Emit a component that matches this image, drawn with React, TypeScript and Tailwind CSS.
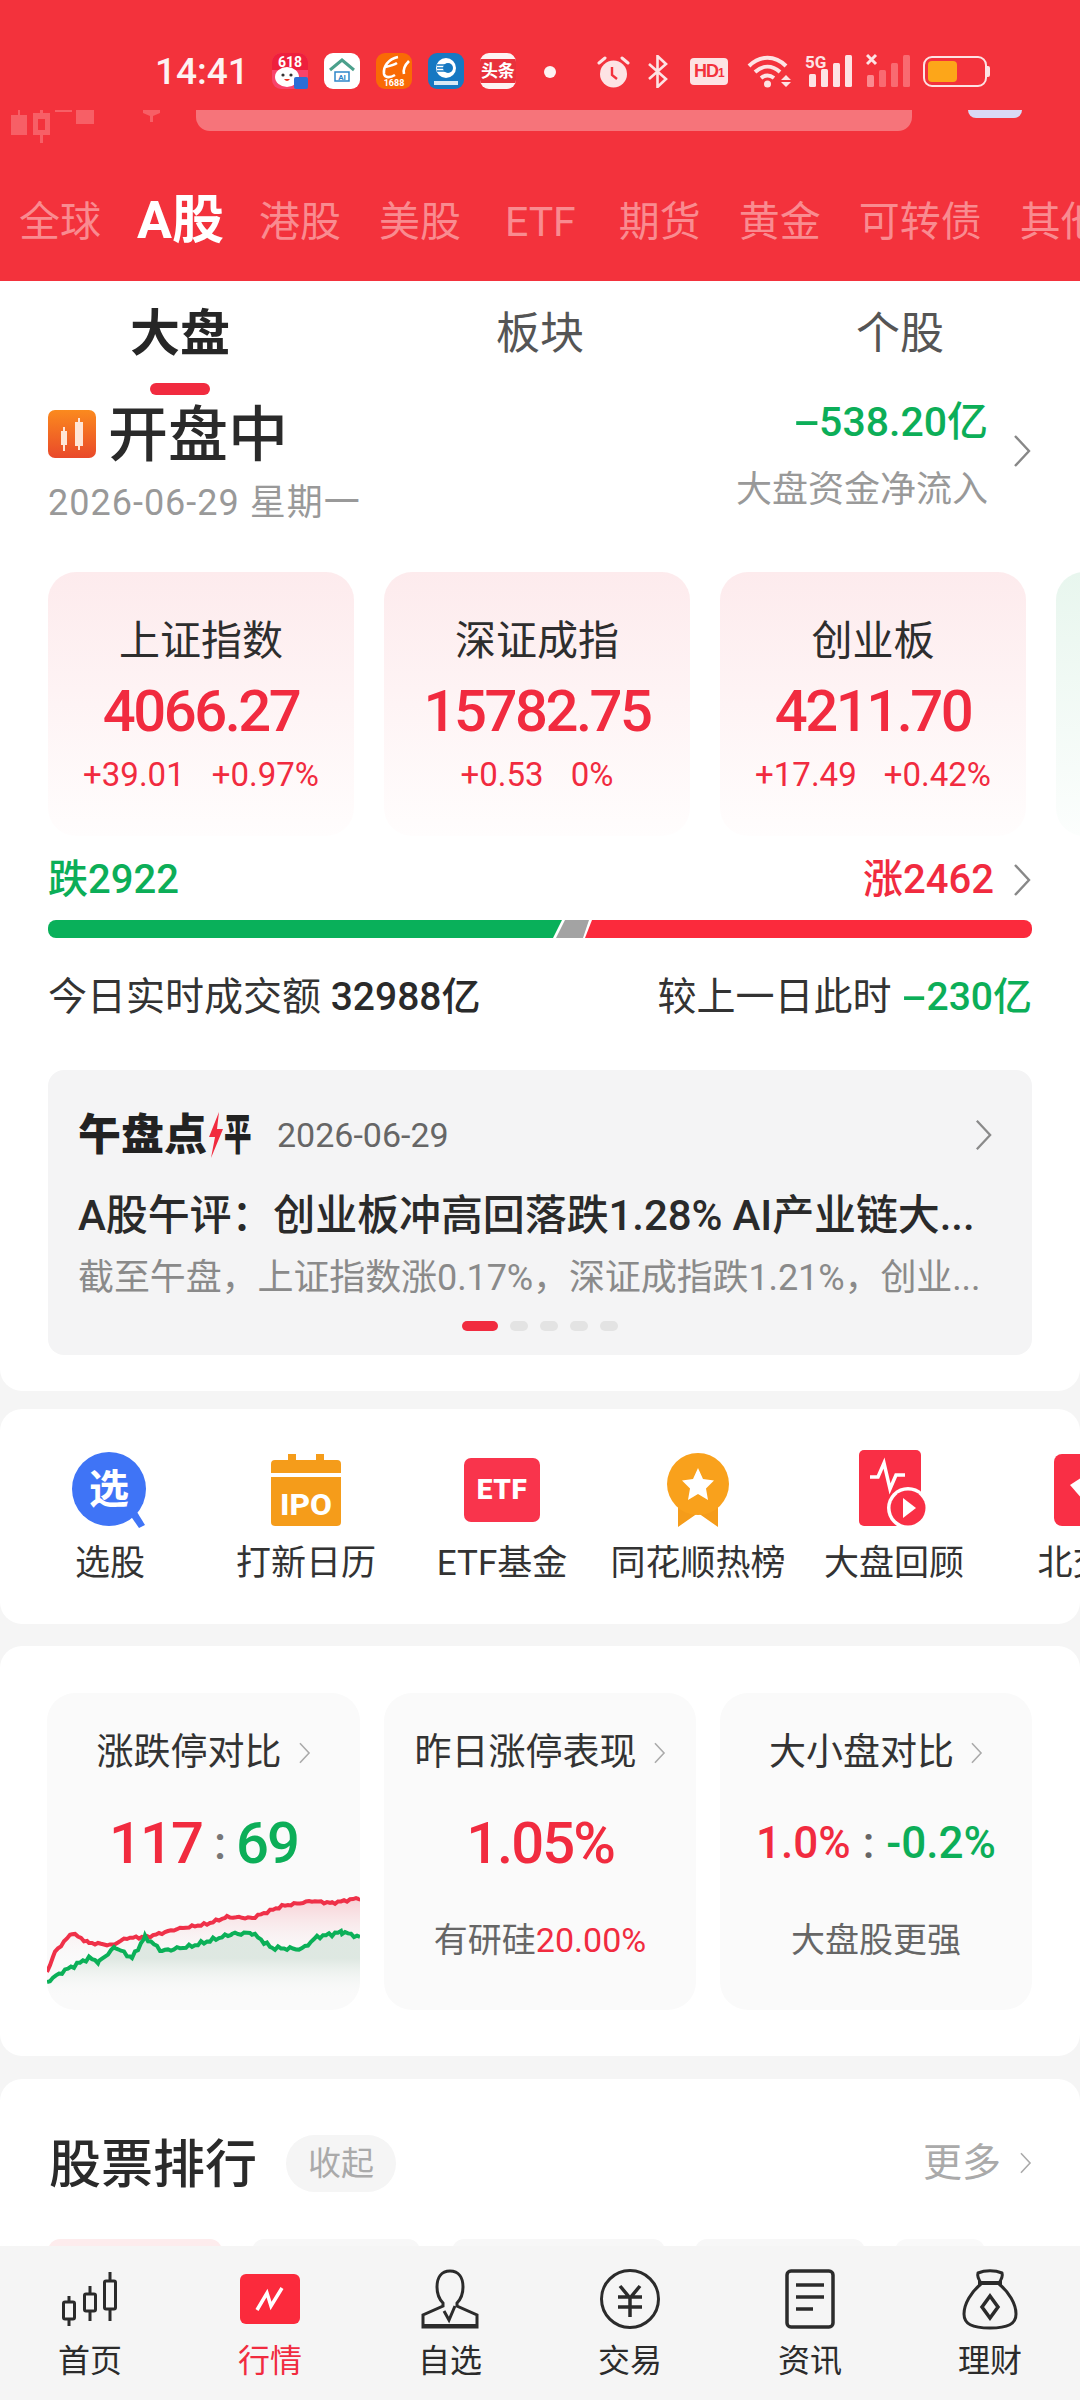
import React from "react";

const RED = "text-[#f12b3f]";
const GREEN = "text-[#0cae58]";

const Chevron = ({ className = "" }: { className?: string }) => (
  <svg viewBox="0 0 20 34" fill="none" className={className}>
    <path d="M3 2l14 15L3 32" stroke="currentColor" strokeWidth="2.4" />
  </svg>
);

// the app draws its minus sign about twice as wide as a hyphen
const Minus = ({ gap }: { gap: string }) => (
  <span className={`inline-block scale-x-[2] origin-left ${gap}`}>-</span>
);

/* ---------- status bar ---------- */
const AppIcons = () => (
  <div className="flex gap-[16px] ml-[23px]">
    <svg viewBox="0 0 36 36" className="w-[36px] h-[36px]">
      <rect width="36" height="36" rx="9" fill="#f8436a" />
      <path d="M0 9a9 9 0 0 1 9-9h18a9 9 0 0 1 9 9v8H0z" fill="#ee1f3d" />
      <text x="18" y="14" textAnchor="middle" fontSize="14" fontWeight="700" fill="#fff" fontFamily="Roboto">618</text>
      <ellipse cx="15" cy="24" rx="12" ry="10" fill="#fff" />
      <circle cx="11" cy="22" r="1.6" fill="#333" />
      <circle cx="19" cy="22" r="1.6" fill="#333" />
      <path d="M12 26q3 4 6 0z" fill="#e32" />
      <rect x="22" y="24" width="14" height="12" rx="2" fill="#2c6ed5" />
    </svg>
    <svg viewBox="0 0 36 36" className="w-[36px] h-[36px]">
      <rect width="36" height="36" rx="9" fill="#fff" />
      <path d="M6 17L18 7l12 10" stroke="#4ba08c" strokeWidth="3" fill="none" />
      <path d="M11 19h14v9H11z" stroke="#2f86c9" strokeWidth="1.5" fill="none" />
      <text x="18" y="27" textAnchor="middle" fontSize="8" fontWeight="700" fill="#2f86c9" fontFamily="Roboto">AI</text>
    </svg>
    <svg viewBox="0 0 36 36" className="w-[36px] h-[36px]">
      <rect width="36" height="36" rx="9" fill="#f96a05" />
      <path d="M22 4C12 6 7 14 8 21c1 4 6 4 11 1M9 14c5-1 9-2 12-4M33 8c-4 4-6 9-5 13" stroke="#fff" strokeWidth="2.6" fill="none" />
      <text x="18" y="33" textAnchor="middle" fontSize="9" fontWeight="700" fill="#fff" fontFamily="Roboto">1688</text>
    </svg>
    <svg viewBox="0 0 36 36" className="w-[36px] h-[36px]">
      <rect width="36" height="36" rx="9" fill="#1678c2" />
      <circle cx="18" cy="15" r="10" fill="#fff" />
      <path d="M9 12h10M9 15h10M9 18h10" stroke="#1678c2" strokeWidth="1.6" />
      <circle cx="20" cy="15" r="5" fill="#1678c2" />
      <rect x="6" y="28" width="24" height="4" fill="#d9e9f5" />
    </svg>
    <div className="w-[36px] h-[36px] rounded-[9px] bg-[#fdf3f3] overflow-hidden flex items-center">
      <span className="w-full h-[24px] bg-[#e8313c] text-white text-[17px] font-bold leading-[24px] text-center whitespace-nowrap">头条</span>
    </div>
  </div>
);

const StatusGlyphs = () => (
  <div className="flex items-center">
    <svg viewBox="0 0 33 33" className="w-[33px] h-[33px] ml-[41px]">
      <circle cx="16.5" cy="19" r="13.5" fill="#fde3e4" />
      <path d="M2 8l6-5M31 8l-6-5" stroke="#fde3e4" strokeWidth="3" strokeLinecap="round" />
      <path d="M15 12v8l5 4" stroke="#f3323c" strokeWidth="2.4" fill="none" />
    </svg>
    <svg viewBox="0 0 21 33" className="w-[21px] h-[33px] ml-[17px]" fill="none">
      <path d="M2 9l17 15-8.500 8V1L19 9 2 24" stroke="#fde3e4" strokeWidth="2.600" />
    </svg>
    <div className="ml-[22px] w-[38px] h-[27px] rounded-[4px] bg-[#fde3e4] text-[#f3323c] text-[18px] font-bold leading-[27px] text-center [font-family:'Liberation_Sans',sans-serif] tracking-[-1px]">
      HD<span className="text-[12px]">1</span>
    </div>
    <svg viewBox="0 0 45 33" className="w-[45px] h-[33px] ml-[19px]" fill="none">
      <path d="M2 11c11-11 26-11 37 0M8 17c8-7 17-7 25 0M14 23c4-3 9-3 13 0" stroke="#fde3e4" strokeWidth="4" />
      <circle cx="20.500" cy="29" r="3.500" fill="#fde3e4" />
      <path d="M34 25l5-5 5 5zM34 27l5 5 5-5z" fill="#fde3e4" />
    </svg>
    <svg viewBox="0 0 47 36" className="w-[47px] h-[36px] ml-[13px]">
      <text x="0" y="15" fontSize="17" fontWeight="700" fill="#fde3e4" fontFamily="Roboto">5G</text>
      <rect x="4" y="21" width="7" height="13" rx="1.500" fill="#fde3e4" />
      <rect x="16" y="16" width="7" height="18" rx="1.500" fill="#fde3e4" />
      <rect x="28" y="10" width="7" height="24" rx="1.500" fill="#fde3e4" />
      <rect x="40" y="2" width="7" height="32" rx="1.500" fill="#fde3e4" />
    </svg>
    <svg viewBox="0 0 44 36" className="w-[44px] h-[36px] ml-[14px]">
      <path d="M1 2l9 9M10 2l-9 9" stroke="#fde3e4" strokeWidth="3" />
      <rect x="1" y="22" width="7" height="12" rx="1.500" fill="#fb8a8f" />
      <rect x="13" y="17" width="7" height="17" rx="1.500" fill="#f96a71" />
      <rect x="25" y="10" width="7" height="24" rx="1.500" fill="#f96a71" />
      <rect x="37" y="2" width="7" height="32" rx="1.500" fill="#f96a71" />
    </svg>
    <div className="ml-[13px] flex items-center">
      <div className="w-[64px] h-[31px] rounded-[9px] border-[2px] border-[#fde3e4] p-[3px]">
        <div className="w-[29px] h-full rounded-[4px] bg-[#fda619]" />
      </div>
      <div className="w-[3px] h-[11px] bg-[#fde3e4] rounded-r-[2px]" />
    </div>
  </div>
);

const StatusBar = () => (
  <div className="h-[110px] pt-[53px] pl-[155px] flex items-start">
    <div className="h-[36px] flex items-center text-[37px] font-medium text-[#fdf2f2] leading-none">14:41</div>
    <AppIcons />
    <span className="w-[12px] h-[12px] rounded-full bg-[#fdf2f2] ml-[28px] mt-[13px]" />
    <StatusGlyphs />
  </div>
);

const marketTabs = ["全球", "A股", "港股", "美股", "ETF", "期货", "黄金", "可转债", "其他"];

const Header = () => (
  <header className="h-[281px] shrink-0 bg-[#f3323c] overflow-hidden">
    <StatusBar />
    <div className="h-[33px] flex items-start">
      <svg viewBox="0 0 160 33" className="w-[160px] h-[33px] ml-[10px] shrink-0">
        <path d="M1 5h16v20H1zM8 0h2v5H8z" fill="#f75f66" />
        <path d="M23 3h17v22H23zM30 25h3v8h-3zM30 0h3v3h-3z" fill="#f75f66" />
        <rect x="28" y="9" width="7" height="11" fill="#f3323c" />
        <rect x="45" y="0" width="17" height="2" fill="#f75f66" />
        <rect x="66" y="0" width="18" height="14" fill="#f75f66" />
        <path d="M133 0h17v3l-7 3v6h-3V6l-7-3z" fill="#f75f66" />
      </svg>
      <div className="ml-[26px] w-[716px] h-[21px] rounded-b-[14px] bg-[#f6747a]" />
      <div className="ml-[56px] w-[54px] h-[8px] rounded-b-full bg-[#d9d9f5]" />
    </div>
    <nav className="mt-[49px] pl-[19px] flex items-center gap-[38px] whitespace-nowrap h-[60px]">
      {marketTabs.map((tab) =>
        tab === "A股" ? (
          <span key={tab} className="text-[52px] font-bold text-white leading-none -mt-[2px] -ml-[2px] -mr-[3px]">{tab}</span>
        ) : (
          <span key={tab} className={`text-[41px] text-[#f98b90] leading-none ${tab === "ETF" ? "ml-[6px] mr-[5px] text-[39px]" : ""}`}>{tab}</span>
        )
      )}
    </nav>
  </header>
);

/* ---------- market overview ---------- */
const indexCards = [
  { name: "上证指数", value: "4066.27", change: "+39.01", pct: "+0.97%" },
  { name: "深证成指", value: "15782.75", change: "+0.53", pct: "0%" },
  { name: "创业板", value: "4211.70", change: "+17.49", pct: "+0.42%" },
];

const IndexCard = ({ name, value, change, pct }: (typeof indexCards)[number]) => (
  <div className="w-[306px] h-[264px] shrink-0 rounded-[28px] bg-gradient-to-b from-[#fdebed] to-[#fffdfd] flex flex-col items-center pt-[46px]">
    <div className="text-[41px] leading-[46px] text-[#2e2e2e]">{name}</div>
    <div className={`text-[58px] font-medium leading-[60px] mt-[17px] tracking-[-2.5px] ${RED}`}>{value}</div>
    <div className={`text-[33px] leading-[36px] mt-[16px] flex gap-[27px] ${RED}`}>
      <span>{change}</span>
      <span>{pct}</span>
    </div>
  </div>
);

const BreadthBar = () => (
  <div className="mt-[18px] h-[18px] flex rounded-[8px] overflow-hidden">
    <div className="w-[514px] bg-[#09b05a] [clip-path:polygon(0_0,514px_0,505px_100%,0_100%)]" />
    <div className="w-[33px] -ml-[6px] bg-[#a3a3a3] [clip-path:polygon(9px_0,33px_0,27px_100%,0_100%)]" />
    <div className="flex-1 -ml-[4px] bg-[#fb2a3c] [clip-path:polygon(7px_0,100%_0,100%_100%,0_100%)]" />
  </div>
);

const NewsCard = () => (
  <div className="mt-[50px] h-[285px] rounded-[16px] bg-[#f4f4f5] pl-[30px] pr-[39px] pt-[40px] flex flex-col">
    <div className="h-[50px] flex items-center">
      <span className="text-[43px] font-black text-[#222] leading-none flex items-center w-[174px] whitespace-nowrap">
        午盘点
        <svg viewBox="0 0 16 46" className="w-[16px] h-[46px] ml-[1px] shrink-0">
          <path d="M11 0L1 25h6L3 46l12-29H9z" fill="#f12b3f" />
        </svg>
        <span className="inline-block w-[28px] scale-x-[0.64] origin-left">平</span>
      </span>
      <span className="ml-[25px] text-[34px] text-[#666]">2026-06-29</span>
      <Chevron className="w-[19px] h-[34px] ml-auto text-[#8a8a8a]" />
    </div>
    <div className="mt-[31px] text-[42px] font-medium leading-[50px] text-[#2a2a2a] whitespace-nowrap tracking-[-0.1px]">A股午评：创业板冲高回落跌1.28% AI产业链大...</div>
    <div className="mt-[12px] text-[36px] leading-[50px] text-[#8a8a8a] whitespace-nowrap tracking-[-0.1px]">截至午盘，上证指数涨0.17%，深证成指跌1.21%，创业...</div>
    <div className="mt-[18px] ml-[9px] flex justify-center gap-[12px]">
      <span className="w-[36px] h-[10px] rounded-full bg-[#f12b3f]" />
      {[0, 1, 2, 3].map((dot) => (
        <span key={dot} className="w-[18px] h-[10px] rounded-full bg-[#e3e3e3]" />
      ))}
    </div>
  </div>
);

const MarketSection = () => (
  <section className="h-[1110px] bg-white rounded-b-[22px] overflow-hidden">
    <div className="grid grid-cols-3 h-[119px]">
      <div className="flex flex-col items-center">
        <span className="mt-[28px] text-[50px] font-bold leading-[50px] text-[#262626]">大盘</span>
        <span className="mt-[24px] w-[60px] h-[12px] rounded-full bg-[#f12b3f]" />
      </div>
      <span className="mt-[30px] text-center text-[44px] leading-[46px] text-[#555]">板块</span>
      <span className="mt-[30px] text-center text-[44px] leading-[46px] text-[#555]">个股</span>
    </div>

    <div className="px-[48px] h-[172px] flex justify-between">
      <div>
        <div className="flex items-center gap-[12px]">
          <svg viewBox="0 0 48 48" className="w-[48px] h-[48px]">
            <defs>
              <linearGradient id="openBadge" x1="0" y1="0" x2="0" y2="1">
                <stop offset="0" stopColor="#fb8a1e" />
                <stop offset="1" stopColor="#e9492a" />
              </linearGradient>
            </defs>
            <rect width="48" height="48" rx="7" fill="url(#openBadge)" />
            <path d="M13 21h6v14h-6zM27 12h8v24h-8z" fill="#ffe5d6" />
            <path d="M16 17v24M31 8v32" stroke="#ffe5d6" strokeWidth="2" />
          </svg>
          <span className="mt-[4px] text-[60px] font-medium leading-[64px] text-[#2a2a2a]">开盘中</span>
        </div>
        <div className="mt-[15px] text-[36px] leading-[40px] text-[#999] tracking-[1px]">2026-06-29 星期一</div>
      </div>
      <div className="flex">
        <div className="text-right">
          <div className={`text-[41px] font-medium leading-[50px] mt-[-3px] ${GREEN}`}>
            <Minus gap="mr-[12px]" />538.20亿
          </div>
          <div className="mt-[23px] text-[36px] leading-[40px] text-[#999]">大盘资金净流入</div>
        </div>
        <Chevron className="w-[20px] h-[34px] mt-[34px] ml-[24px] text-[#888]" />
      </div>
    </div>

    <div className="pl-[48px] flex gap-[30px]">
      {indexCards.map((card) => (
        <IndexCard key={card.name} {...card} />
      ))}
      <div className="w-[306px] h-[264px] shrink-0 rounded-[28px] bg-gradient-to-b from-[#e8f6ee] to-[#fcfefd]" />
    </div>

    <div className="px-[48px]">
      <div className="mt-[22px] h-[44px] flex items-center text-[40px] font-medium">
        <span className={GREEN}>跌2922</span>
        <span className={`ml-auto ${RED}`}>涨2462</span>
        <Chevron className="w-[20px] h-[34px] ml-[18px] text-[#888]" />
      </div>
      <BreadthBar />
      <div className="mt-[36px] h-[46px] flex items-center justify-between text-[39px] text-[#333]">
        <span>
          今日实时成交额 <span className="font-medium text-[#2a2a2a]">32988亿</span>
        </span>
        <span>
          较上一日此时 <span className={`font-medium ${GREEN}`}><Minus gap="mr-[12px]" />230亿</span>
        </span>
      </div>
      <NewsCard />
    </div>
  </section>
);

/* ---------- shortcuts ---------- */
const ShortcutIcon = ({ kind }: { kind: string }) => {
  if (kind === "pick")
    return (
      <svg viewBox="0 0 76 78" className="w-[76px] h-[78px]">
        <path d="M58 64l9 13 6-3-8-13z" fill="#3f74f6" />
        <circle cx="37" cy="38" r="37" fill="#3f74f6" />
        <text x="37" y="52" textAnchor="middle" fontSize="40" fontWeight="700" fill="#fff">选</text>
      </svg>
    );
  if (kind === "ipo")
    return (
      <svg viewBox="0 0 70 72" className="w-[70px] h-[72px]">
        <path d="M17 0h8v6h20V0h8v6h13a4 4 0 0 1 4 4v9H0v-9a4 4 0 0 1 4-4h13z" fill="#f59c1a" />
        <path d="M0 23h70v45a4 4 0 0 1-4 4H4a4 4 0 0 1-4-4z" fill="#f59c1a" />
        <text x="35" y="61" textAnchor="middle" fontSize="30" fontWeight="800" fill="#fff" fontFamily="Roboto" textLength="52" lengthAdjust="spacingAndGlyphs">IPO</text>
      </svg>
    );
  if (kind === "etf")
    return (
      <div className="w-[76px] h-[64px] rounded-[7px] bg-[#f9344c] text-white text-[28px] font-black leading-[64px] text-center tracking-[0.5px]">ETF</div>
    );
  if (kind === "medal")
    return (
      <svg viewBox="0 0 62 74" className="w-[62px] h-[74px]">
        <path d="M11 40v34l20-14 20 14V40z" fill="#f59c1a" />
        <circle cx="31" cy="31" r="31" fill="#f9a11c" />
        <path d="M31 15l5 11 11 1.500-8 8 2 11.500-10-6-10 6 2-11.500-8-8L26 26z" fill="#fff" />
      </svg>
    );
  return (
    <svg viewBox="0 0 70 80" className="w-[70px] h-[80px]">
      <rect width="62" height="76" rx="5" fill="#f92f45" />
      <path d="M11 27h8l6-14 6 26 6-14h9" stroke="#fff" strokeWidth="3.500" fill="none" />
      <circle cx="49" cy="58" r="21" fill="#fff" />
      <circle cx="49" cy="58" r="17.500" fill="#f92f45" />
      <path d="M44 48l13 10-13 10z" fill="#fff" />
    </svg>
  );
};

const shortcuts = [
  { label: "选股", kind: "pick" },
  { label: "打新日历", kind: "ipo" },
  { label: "ETF基金", kind: "etf" },
  { label: "同花顺热榜", kind: "medal" },
  { label: "大盘回顾", kind: "review" },
];

const ShortcutSection = () => (
  <section className="mt-[18px] h-[215px] bg-white rounded-[22px] overflow-hidden flex pl-[12px] pt-[40px]">
    {shortcuts.map((item) => (
      <div key={item.label} className="w-[196px] shrink-0 flex flex-col items-center">
        <div className="h-[82px] flex items-center justify-center">
          <ShortcutIcon kind={item.kind} />
        </div>
        <span className="mt-[11px] text-[35px] leading-[44px] text-[#333] whitespace-nowrap">{item.label}</span>
      </div>
    ))}
    <div className="w-[196px] shrink-0 flex flex-col items-center">
      <div className="h-[82px] flex items-center justify-center">
        <div className="w-[72px] h-[72px] rounded-[8px] bg-[#f92f45] flex items-center justify-center">
          <svg viewBox="0 0 40 36" className="w-[40px] h-[36px]">
            <path d="M20 0l20 13-20 23L0 13z" fill="#fff" />
          </svg>
        </div>
      </div>
      <span className="mt-[11px] text-[35px] leading-[44px] text-[#333] whitespace-nowrap">北交所</span>
    </div>
  </section>
);

/* ---------- comparison cards ---------- */
const redKeys: [number, number][] = [[0, 76], [8, 56], [25, 37], [42, 47], [65, 49], [80, 42], [100, 41], [130, 33], [160, 28], [180, 21], [205, 22], [235, 10], [265, 5], [285, 7], [313, 2]];
const greenKeys: [number, number][] = [[0, 86], [15, 76], [42, 62], [52, 66], [68, 51], [85, 62], [98, 41], [115, 55], [145, 50], [185, 38], [205, 37], [225, 52], [255, 53], [270, 41], [295, 36], [313, 41]];

// key points plus a small fixed wobble, so the lines read as intraday ticks
const tickPath = (keys: [number, number][], amp: number) => {
  let d = "";
  let n = 0;
  for (let i = 0; i < keys.length - 1; i++) {
    const [x0, y0] = keys[i];
    const [x1, y1] = keys[i + 1];
    for (let x = x0; x < x1; x += 3) {
      const t = (x - x0) / (x1 - x0);
      const wob = Math.sin(n * 2.3) * Math.cos(n * 0.7) * amp;
      d += `${d ? "L" : "M"}${x} ${(y0 + (y1 - y0) * t + wob).toFixed(1)}`;
      n++;
    }
  }
  const [lx, ly] = keys[keys.length - 1];
  return `${d}L${lx} ${ly}`;
};

const MiniChart = () => {
  const red = tickPath(redKeys, 1.4);
  const green = tickPath(greenKeys, 2.2);
  return (
    <svg viewBox="0 0 313 113" preserveAspectRatio="none" className="w-[313px] h-[113px] mt-[23px]">
      <defs>
        <linearGradient id="redFill" x1="0" y1="0" x2="0" y2="1">
          <stop offset="0" stopColor="#f7c5cb" stopOpacity="0.8" />
          <stop offset="0.6" stopColor="#fafafa" stopOpacity="0" />
        </linearGradient>
        <linearGradient id="greenFill" x1="0" y1="0" x2="0" y2="1">
          <stop offset="0.35" stopColor="#dbe6df" stopOpacity="0.9" />
          <stop offset="0.85" stopColor="#fafafa" stopOpacity="0" />
        </linearGradient>
      </defs>
      <path d={`${red}L313 113L0 113Z`} fill="url(#redFill)" />
      <path d={`${green}L313 113L0 113Z`} fill="url(#greenFill)" />
      <path d={red} fill="none" stroke="#ef3149" strokeWidth="4" />
      <path d={green} fill="none" stroke="#0bb058" strokeWidth="4" />
    </svg>
  );
};

const CardTitle = ({ title }: { title: string }) => (
  <div className="mt-[39px] h-[42px] flex items-center justify-center text-[37px] text-[#333] whitespace-nowrap">
    {title}
    <Chevron className="w-[13px] h-[26px] ml-[16px] text-[#aaa]" />
  </div>
);

const CompareSection = () => (
  <section className="mt-[22px] h-[410px] bg-white rounded-[22px] overflow-hidden px-[47px] pt-[47px] flex gap-[24px]">
    <div className="w-[313px] h-[317px] rounded-[28px] bg-[#fafafa] overflow-hidden">
      <CardTitle title="涨跌停对比" />
      <div className="mt-[39px] h-[60px] flex items-center justify-center text-[58px] font-medium leading-none tracking-[-2px]">
        <span className={RED}>117</span>
        <span className="text-[#777] mx-[12px] text-[46px]">:</span>
        <span className={GREEN}>69</span>
      </div>
      <MiniChart />
    </div>
    <div className="w-[312px] h-[317px] rounded-[28px] bg-[#fafafa] flex flex-col items-center">
      <CardTitle title="昨日涨停表现" />
      <div className={`mt-[39px] h-[60px] flex items-center text-[58px] font-medium leading-none tracking-[-2px] ${RED}`}>1.05%</div>
      <div className="mt-[45px] text-[34px] leading-[44px] text-[#666]">
        有研硅<span className={RED}>20.00%</span>
      </div>
    </div>
    <div className="w-[312px] h-[317px] rounded-[28px] bg-[#fafafa] flex flex-col items-center">
      <CardTitle title="大小盘对比" />
      <div className="mt-[39px] h-[60px] flex items-center text-[44px] font-medium leading-none">
        <span className={RED}>1.0%</span>
        <span className="text-[#666] mx-[12px]">:</span>
        <span className={GREEN}>-0.2%</span>
      </div>
      <div className="mt-[45px] text-[34px] leading-[44px] text-[#666]">大盘股更强</div>
    </div>
  </section>
);

/* ---------- ranking ---------- */
const RankingSection = () => (
  <section className="mt-[23px] flex-1 bg-white rounded-t-[22px] overflow-hidden px-[48px]">
    <div className="mt-[54px] h-[60px] flex items-center">
      <span className="mt-[6px] ml-[1px] text-[52px] font-medium leading-none text-[#2a2a2a]">股票排行</span>
      <span className="ml-[29px] w-[110px] h-[57px] rounded-full bg-[#f5f5f5] text-[33px] leading-[57px] text-center text-[#aaa]">收起</span>
      <span className="ml-auto text-[39px] text-[#aaa]">更多</span>
      <Chevron className="w-[13px] h-[36px] ml-[18px] text-[#aaa]" />
    </div>
    <div className="mt-[46px] flex">
      <div className="w-[174px] h-[12px] rounded-t-[12px] bg-[#fdeced]" />
      <div className="ml-[30px] w-[168px] h-[12px] rounded-t-[12px] bg-[#f7f7f7]" />
      <div className="ml-[32px] w-[213px] h-[12px] rounded-t-[12px] bg-[#f7f7f7]" />
      <div className="ml-[30px] w-[170px] h-[12px] rounded-t-[12px] bg-[#f7f7f7]" />
      <div className="ml-[30px] w-[90px] h-[12px] rounded-t-[12px] bg-[#f9f9f9]" />
    </div>
  </section>
);

/* ---------- bottom nav ---------- */
const NavIcon = ({ kind }: { kind: string }) => {
  const line = { fill: "none", stroke: "#2b2b2b", strokeWidth: 3 };
  if (kind === "home")
    return (
      <svg viewBox="0 0 60 60" className="w-[60px] h-[60px]" {...line}>
        <path d="M9 27v6M9 50v7M30 17v8M30 42v10M50 3v9M50 40v12" />
        <rect x="3.500" y="33" width="11" height="17" rx="1.500" />
        <rect x="24.500" y="25" width="11" height="17" rx="1.500" />
        <rect x="44.500" y="12" width="11" height="28" rx="1.500" />
      </svg>
    );
  if (kind === "market")
    return (
      <div className="w-[60px] h-[50px] rounded-[6px] bg-[#fb2a3c] flex items-center justify-center">
        <svg viewBox="0 0 30 30" className="w-[30px] h-[30px]">
          <path d="M2 26L12 9l4 13L27 4" fill="none" stroke="#fff" strokeWidth="3.500" />
        </svg>
      </div>
    );
  if (kind === "watch")
    return (
      <svg viewBox="0 0 60 60" className="w-[60px] h-[60px]" {...line}>
        <path d="M30 2c-9 0-13 7-13 16 0 8 3 13 6 16v3L3 46v12h54V46L37 37v-3c3-3 6-8 6-16 0-9-4-16-13-16z" />
        <path d="M24 42l5 9 6-14" />
        <path d="M2 57h56" strokeWidth="4" />
      </svg>
    );
  if (kind === "trade")
    return (
      <svg viewBox="0 0 60 60" className="w-[60px] h-[60px]" {...line}>
        <circle cx="30" cy="30" r="28.500" />
        <path d="M20 17l10 12 10-12M18 28h24M18 38h24M30 28v20" strokeWidth="3.500" />
      </svg>
    );
  if (kind === "news")
    return (
      <svg viewBox="0 0 50 60" className="w-[50px] h-[60px]" {...line}>
        <rect x="2" y="2" width="46" height="56" rx="4" strokeWidth="3.500" />
        <path d="M11 16h28M11 28h28M11 40h17" strokeWidth="3.500" />
      </svg>
    );
  return (
    <svg viewBox="0 0 56 62" className="w-[56px] h-[62px]" {...line}>
      <path d="M19 15c-2-3-4-7-3-10 7-3 17-3 24 0 1 3-1 7-3 10" />
      <path d="M16 15h24" strokeWidth="4" />
      <path d="M19 16C9 24 2 36 2 46c0 10 8 14 26 14s26-4 26-14c0-10-7-22-17-30" />
      <path d="M28 28l8 11-8 11-8-11z" strokeWidth="3.500" />
    </svg>
  );
};

const navItems = [
  { label: "首页", kind: "home" },
  { label: "行情", kind: "market" },
  { label: "自选", kind: "watch" },
  { label: "交易", kind: "trade" },
  { label: "资讯", kind: "news" },
  { label: "理财", kind: "wealth" },
];

const BottomNav = () => (
  <nav className="h-[154px] shrink-0 bg-[#f5f5f5] grid grid-cols-6">
    {navItems.map((item) => (
      <div key={item.label} className="flex flex-col items-center pt-[22px]">
        <div className="h-[62px] flex items-center">
          <NavIcon kind={item.kind} />
        </div>
        <span className={`mt-[11px] text-[32px] leading-[40px] ${item.kind === "market" ? RED : "text-[#2b2b2b]"}`}>{item.label}</span>
      </div>
    ))}
  </nav>
);

export default function App() {
  return (
    <div className="w-[1080px] h-[2400px] overflow-hidden bg-[#f5f5f5] flex flex-col [font-family:Roboto,'Noto_Sans_CJK_SC',sans-serif]">
      <Header />
      <main className="flex-1 min-h-0 flex flex-col overflow-hidden">
        <MarketSection />
        <ShortcutSection />
        <CompareSection />
        <RankingSection />
      </main>
      <BottomNav />
    </div>
  );
}
